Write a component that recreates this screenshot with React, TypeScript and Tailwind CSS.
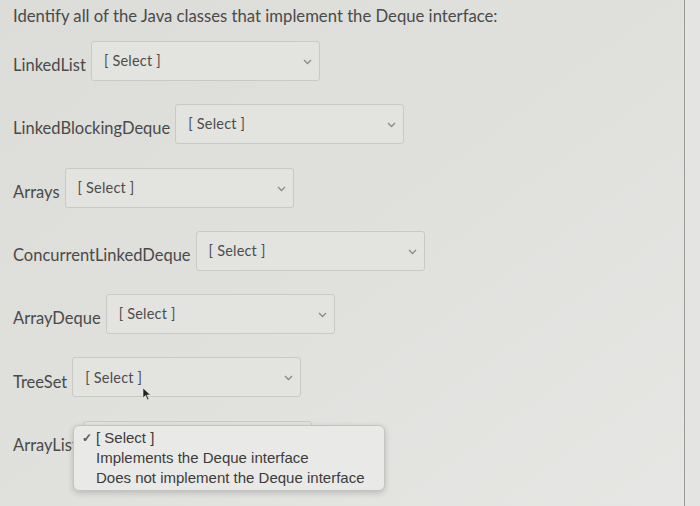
import React from "react";

const rows = [
  "LinkedList",
  "LinkedBlockingDeque",
  "Arrays",
  "ConcurrentLinkedDeque",
  "ArrayDeque",
  "TreeSet",
];

function Chevron() {
  return (
    <svg width="9" height="6" viewBox="0 0 9 6" className="mt-[2px] shrink-0">
      <path d="M1 1 L4.5 4.5 L8 1" fill="none" stroke="#8a8a8a" strokeWidth="1.3" />
    </svg>
  );
}

function SelectBox({ hideText }: { hideText?: boolean }) {
  return (
    <div className="relative flex h-[40px] w-[229px] items-center justify-between rounded-[3px] border border-[#c9c9c6] bg-[#e3e3e0] pl-[12px] pr-[7px]">
      <span className="text-[14.5px] tracking-[0.2px] text-[#4d4d4d]">{hideText ? "" : "[ Select ]"}</span>
      <Chevron />
    </div>
  );
}

export default function App() {
  return (
    <div
      className="relative h-[506px] w-[700px] overflow-hidden bg-gradient-to-br from-[#dcdcd8] via-[#e0e0dd] to-[#e6e6e4] text-[#4a4a4a]"
      style={{ fontFamily: "Lato, 'Open Sans', sans-serif" }}
    >
      <div className="absolute right-0 top-0 h-full w-[16px] border-l border-[#9a9a98] bg-[#e4e4e2]" />
      <div className="flex flex-col pl-[13px] pt-[5px]">
        <div className="text-[16.7px] leading-[22px] text-[#4a4a4a]">
          Identify all of the Java classes that implement the Deque interface:
        </div>
        <div className="mt-[14px] flex flex-col gap-[23.3px]">
          {rows.map((r) => (
            <div key={r} className="flex items-center gap-[5px]">
              <span className="pt-[9px] text-[16.5px]">{r}</span>
              <SelectBox />
            </div>
          ))}
          <div className="relative flex items-center gap-[5px]">
            <span className="pt-[9px] text-[16.5px]">ArrayList</span>
            <SelectBox hideText />
            <div
              className="absolute left-[60px] top-[4px] z-10 w-[312px] rounded-[6px] border border-[#c3c3c1] bg-[#e9e9e7] py-[2px] text-[15px] leading-[20px] text-[#3c3c3c] shadow-[0_2px_6px_rgba(0,0,0,0.18)]"
              style={{ fontFamily: "'Liberation Sans', Arial, sans-serif" }}
            >
              <div className="flex items-center">
                <span className="w-[22px] pl-[8px] text-[12px] font-bold text-[#555]">✓</span>
                <span>[ Select ]</span>
              </div>
              <div className="pl-[22px]">Implements the Deque interface</div>
              <div className="pl-[22px]">Does not implement the Deque interface</div>
            </div>
          </div>
        </div>
      </div>
      <svg className="absolute left-[142px] top-[387px] z-20" width="10" height="14" viewBox="0 0 10 14">
        <path d="M1 1 L1 11 L3.5 8.5 L5.5 13 L7 12.3 L5 8 L8.5 8 Z" fill="#222" stroke="#eee" strokeWidth="0.6" />
      </svg>
    </div>
  );
}
